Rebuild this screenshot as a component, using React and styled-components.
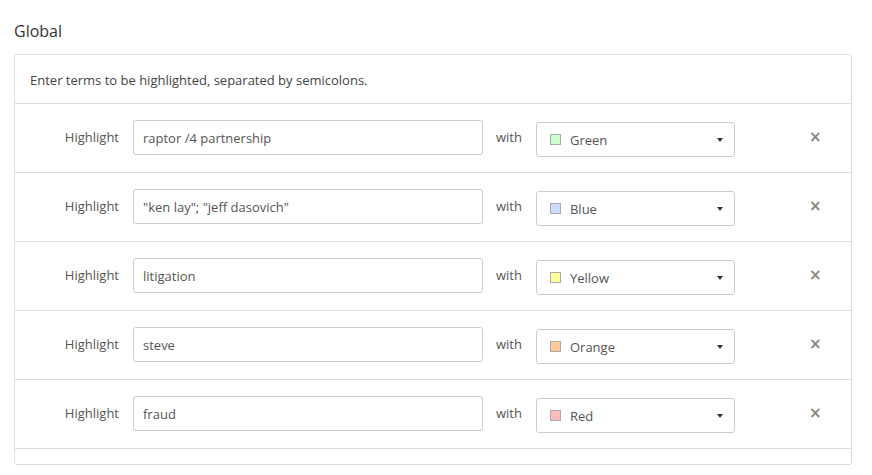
import React from 'react'
import styled, { createGlobalStyle } from 'styled-components'

const GlobalStyle = createGlobalStyle`
  body {
    margin: 0;
    background: #fff;
    font-family: "Open Sans", "Liberation Sans", sans-serif;
    color: #333;
  }
`

const Page = styled.div`
  padding: 20px 20px 0 14px;
`

const Title = styled.h2`
  margin: 0 0 12px;
  font-size: 16px;
  font-weight: 400;
  line-height: 22px;
  color: #333;
`

const Panel = styled.div`
  border: 1px solid #ddd;
  border-radius: 3px;
  padding-bottom: 15px;
`

const Intro = styled.div`
  padding: 16px 15px 13px;
  font-size: 13px;
  line-height: 19px;
  color: #444;
  border-bottom: 1px solid #ddd;
`

const Row = styled.div`
  display: flex;
  align-items: flex-start;
  height: 68px;
  border-bottom: 1px solid #ddd;
`

const Label = styled.span`
  width: 104px;
  text-align: right;
  margin-top: 24px;
  font-size: 13px;
  line-height: 18px;
  color: #555;
`

const TermInput = styled.input`
  box-sizing: border-box;
  width: 350px;
  height: 35px;
  margin: 16px 0 0 14px;
  padding: 0 10px 0 9px;
  border: 1px solid #ccc;
  border-radius: 3px;
  font-family: inherit;
  font-size: 13px;
  color: #555;
  outline: none;
`

const With = styled.span`
  margin: 24px 0 0 13px;
  font-size: 13px;
  line-height: 18px;
  color: #555;
`

const Select = styled.div`
  box-sizing: border-box;
  display: flex;
  align-items: center;
  width: 199px;
  height: 35px;
  margin: 18px 0 0 14px;
  padding: 0 11px 0 13px;
  border: 1px solid #ccc;
  border-radius: 3px;
  font-size: 13px;
  color: #555;
`

const Swatch = styled.span`
  box-sizing: border-box;
  width: 11px;
  height: 11px;
  border: 1px solid #aaa;
  background: ${p => p.$color};
  margin-right: 9px;
`

const SelectText = styled.span`
  flex: 1;
`

const Caret = styled.span`
  width: 0;
  height: 0;
  border-left: 3px solid transparent;
  border-right: 3px solid transparent;
  border-top: 4px solid #333;
`

const Remove = styled.button`
  margin: 23px 0 0 74px;
  padding: 0;
  border: 0;
  background: none;
  font-family: "DejaVu Sans", sans-serif;
  font-size: 15px;
  font-weight: 700;
  line-height: 20px;
  color: #8a8580;
  cursor: pointer;
`

const rows = [
  { term: 'raptor /4 partnership', color: '#ccffcc', name: 'Green' },
  { term: '"ken lay"; "jeff dasovich"', color: '#ccdcff', name: 'Blue' },
  { term: 'litigation', color: '#ffff99', name: 'Yellow' },
  { term: 'steve', color: '#ffcc99', name: 'Orange' },
  { term: 'fraud', color: '#ffbbbb', name: 'Red' },
]

export default function App() {
  return (
    <Page>
      <GlobalStyle />
      <Title>Global</Title>
      <Panel>
        <Intro>Enter terms to be highlighted, separated by semicolons.</Intro>
        {rows.map(r => (
          <Row key={r.name}>
            <Label>Highlight</Label>
            <TermInput defaultValue={r.term} />
            <With>with</With>
            <Select>
              <Swatch $color={r.color} />
              <SelectText>{r.name}</SelectText>
              <Caret />
            </Select>
            <Remove>×</Remove>
          </Row>
        ))}
      </Panel>
    </Page>
  )
}
